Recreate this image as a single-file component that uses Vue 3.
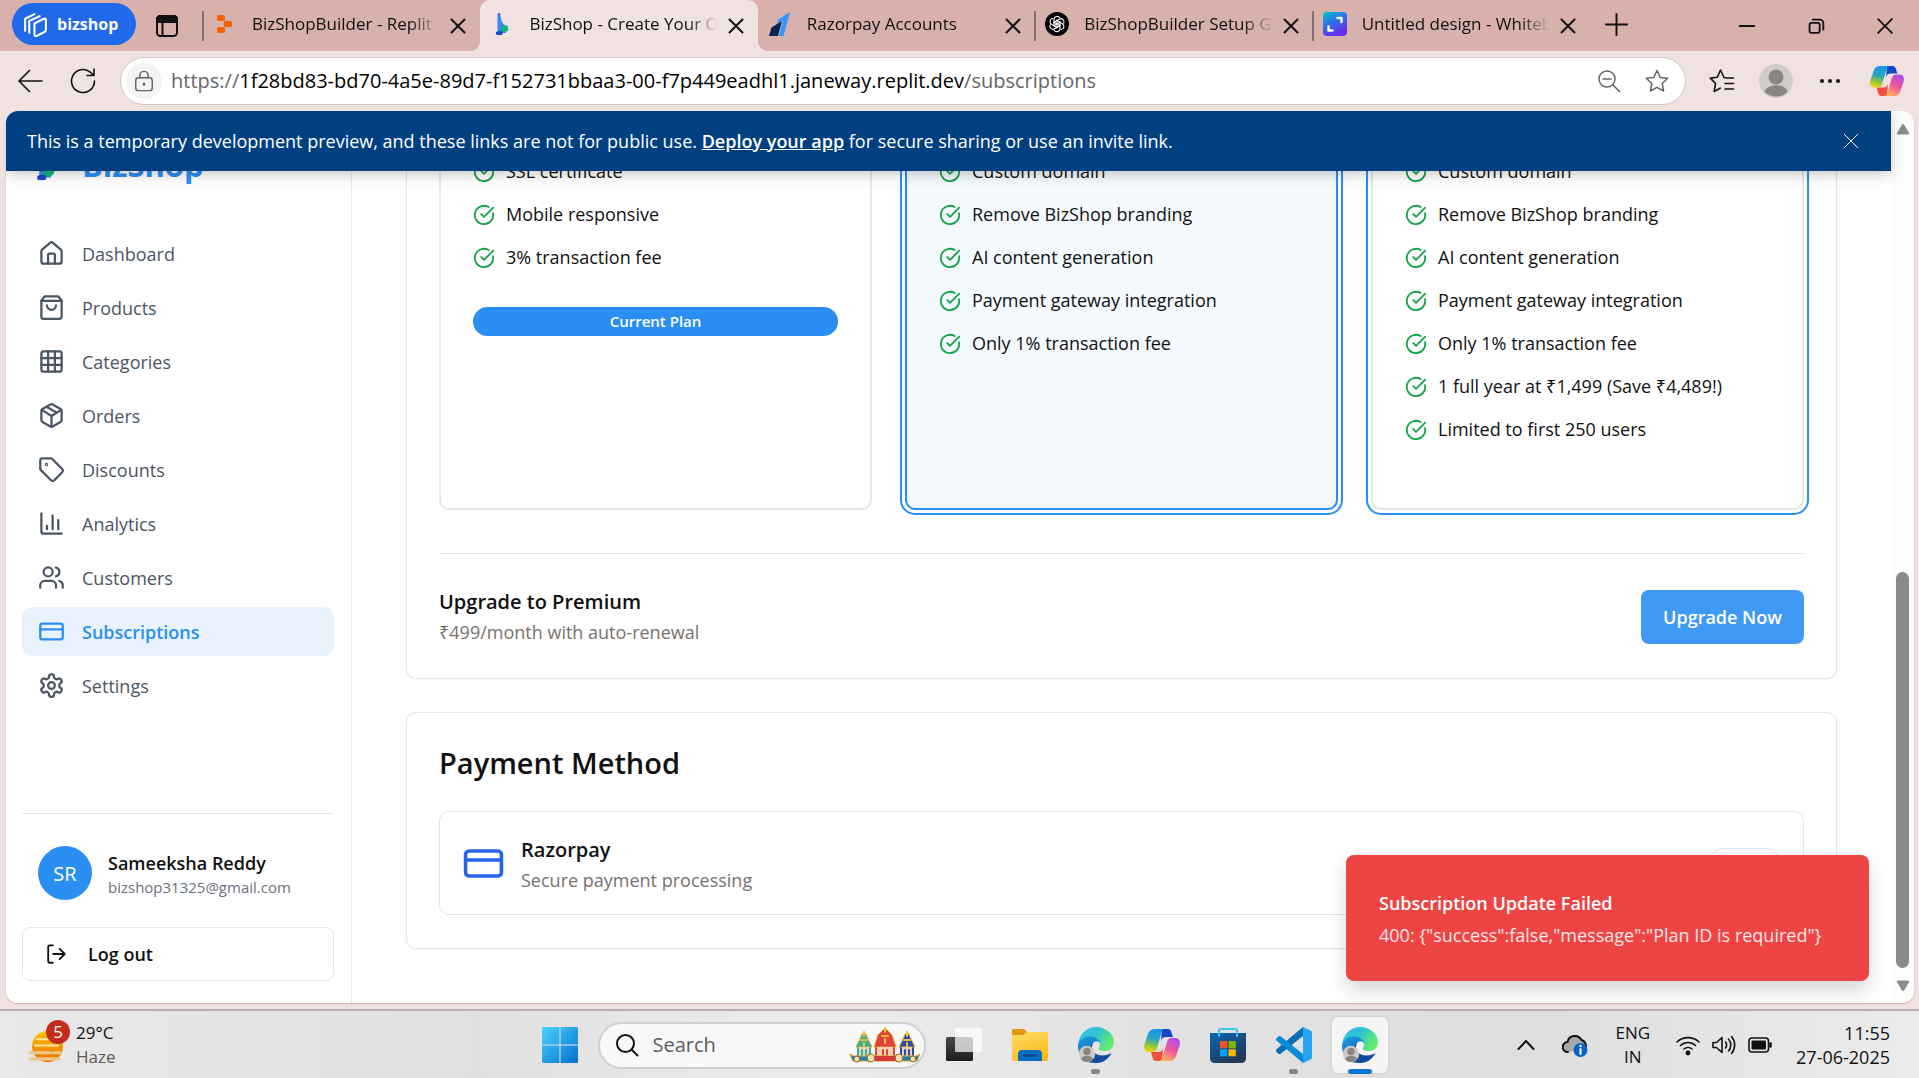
<script setup>
import { ref } from 'vue'

const tabs = [
  { title: 'BizShopBuilder - Replit', icon: 'replit' },
  { title: 'BizShop - Create Your Own Store', icon: 'bizshop', active: true },
  { title: 'Razorpay Accounts', icon: 'razorpay' },
  { title: 'BizShopBuilder Setup Guide', icon: 'chatgpt' },
  { title: 'Untitled design - Whiteboard', icon: 'canva' }
]

const navItems = [
  { label: 'Dashboard', icon: 'home' },
  { label: 'Products', icon: 'bag' },
  { label: 'Categories', icon: 'grid' },
  { label: 'Orders', icon: 'package' },
  { label: 'Discounts', icon: 'tag' },
  { label: 'Analytics', icon: 'chart' },
  { label: 'Customers', icon: 'users' },
  { label: 'Subscriptions', icon: 'card', active: true },
  { label: 'Settings', icon: 'gear' }
]

const plans = [
  {
    kind: 'basic',
    current: true,
    features: ['SSL certificate', 'Mobile responsive', '3% transaction fee']
  },
  {
    kind: 'selected',
    features: [
      'Custom domain',
      'Remove BizShop branding',
      'AI content generation',
      'Payment gateway integration',
      'Only 1% transaction fee'
    ]
  },
  {
    kind: 'offer',
    features: [
      'Custom domain',
      'Remove BizShop branding',
      'AI content generation',
      'Payment gateway integration',
      'Only 1% transaction fee',
      '1 full year at ₹1,499 (Save ₹4,489!)',
      'Limited to first 250 users'
    ]
  }
]

const dockApps = [
  { name: 'Task view', icon: 'taskview' },
  { name: 'File Explorer', icon: 'folder' },
  { name: 'Edge', icon: 'edge', running: true },
  { name: 'Copilot', icon: 'copilot' },
  { name: 'Store', icon: 'store' },
  { name: 'Code', icon: 'vscode', running: true },
  { name: 'Edge window', icon: 'edge', active: true }
]

const search = ref('')
</script>

<template>
  <svg class="sprite" aria-hidden="true">
    <defs>
      <linearGradient id="g-edge-a" x1="0" y1="0" x2="1" y2="0.5">
        <stop offset="0" stop-color="#35c1f1" /><stop offset="0.5" stop-color="#2bc3d2" /><stop offset="1" stop-color="#66eb6e" />
      </linearGradient>
      <linearGradient id="g-edge-b" x1="0" y1="0" x2="0.4" y2="1">
        <stop offset="0" stop-color="#1b9de2" /><stop offset="1" stop-color="#0f63b8" />
      </linearGradient>
      <linearGradient id="g-cop-a" x1="0.4" y1="0" x2="0.2" y2="1">
        <stop offset="0" stop-color="#1697e8" /><stop offset="0.4" stop-color="#2aa5c4" /><stop offset="0.7" stop-color="#8dc63f" /><stop offset="1" stop-color="#ffd60a" />
      </linearGradient>
      <linearGradient id="g-cop-b" x1="0.8" y1="0" x2="0.3" y2="1">
        <stop offset="0" stop-color="#a84df0" /><stop offset="0.5" stop-color="#f0559b" /><stop offset="1" stop-color="#ffb25c" />
      </linearGradient>
      <linearGradient id="g-canva" x1="0" y1="0" x2="0.5" y2="1">
        <stop offset="0" stop-color="#00c4cc" /><stop offset="0.5" stop-color="#2f6fe8" /><stop offset="1" stop-color="#6a2cf0" />
      </linearGradient>
      <linearGradient id="g-win" gradientUnits="userSpaceOnUse" x1="0" y1="0" x2="35" y2="35">
        <stop offset="0" stop-color="#4fd2fd" /><stop offset="1" stop-color="#0070d0" />
      </linearGradient>
      <linearGradient id="g-folder" x1="0" y1="0" x2="0.5" y2="1">
        <stop offset="0" stop-color="#ffdd6b" /><stop offset="1" stop-color="#fbbc1d" />
      </linearGradient>
      <linearGradient id="g-store" x1="0" y1="0" x2="0.6" y2="1">
        <stop offset="0" stop-color="#0a67b5" /><stop offset="1" stop-color="#243757" />
      </linearGradient>
      <linearGradient id="g-sun" x1="0" y1="0" x2="0" y2="1">
        <stop offset="0" stop-color="#ffc400" /><stop offset="1" stop-color="#ef6c00" />
      </linearGradient>
      <linearGradient id="g-dark" x1="0" y1="0" x2="0" y2="1">
        <stop offset="0" stop-color="#4a4a4a" /><stop offset="1" stop-color="#1c1c1c" />
      </linearGradient>
    </defs>

    <symbol id="i-close" viewBox="0 0 24 24"><path d="M5.500 5.500l13 13M18.500 5.500l-13 13" /></symbol>
    <symbol id="i-home" viewBox="0 0 24 24"><path d="M15 21v-8a1 1 0 0 0-1-1h-4a1 1 0 0 0-1 1v8" /><path d="M3 10a2 2 0 0 1 .709-1.528l7-5.999a2 2 0 0 1 2.582 0l7 5.999A2 2 0 0 1 21 10v9a2 2 0 0 1-2 2H5a2 2 0 0 1-2-2z" /></symbol>
    <symbol id="i-bag" viewBox="0 0 24 24"><path d="M6 2 3 6v14a2 2 0 0 0 2 2h14a2 2 0 0 0 2-2V6l-3-4Z" /><path d="M3 6h18" /><path d="M16 10a4 4 0 0 1-8 0" /></symbol>
    <symbol id="i-grid" viewBox="0 0 24 24"><rect x="3" y="3" width="18" height="18" rx="2" /><path d="M3 9h18M3 15h18M9 3v18M15 3v18" /></symbol>
    <symbol id="i-package" viewBox="0 0 24 24"><path d="M11 21.730a2 2 0 0 0 2 0l7-4A2 2 0 0 0 21 16V8a2 2 0 0 0-1-1.730l-7-4a2 2 0 0 0-2 0l-7 4A2 2 0 0 0 3 8v8a2 2 0 0 0 1 1.730z" /><path d="M12 22V12" /><path d="m3.300 7 7.703 4.734a2 2 0 0 0 1.994 0L20.700 7" /><path d="m7.500 4.270 9 5.150" /></symbol>
    <symbol id="i-tag" viewBox="0 0 24 24"><path d="M12.586 2.586A2 2 0 0 0 11.172 2H4a2 2 0 0 0-2 2v7.172a2 2 0 0 0 .586 1.414l8.704 8.704a2.426 2.426 0 0 0 3.420 0l6.580-6.580a2.426 2.426 0 0 0 0-3.420z" /><circle cx="7.500" cy="7.500" r=".5" /></symbol>
    <symbol id="i-chart" viewBox="0 0 24 24"><path d="M3 3v16a2 2 0 0 0 2 2h16M18 17V9M13 17V5M8 17v-3" /></symbol>
    <symbol id="i-users" viewBox="0 0 24 24"><path d="M16 21v-2a4 4 0 0 0-4-4H6a4 4 0 0 0-4 4v2" /><circle cx="9" cy="7" r="4" /><path d="M22 21v-2a4 4 0 0 0-3-3.870M16 3.130a4 4 0 0 1 0 7.750" /></symbol>
    <symbol id="i-card" viewBox="0 0 24 24"><rect x="2" y="5" width="20" height="14" rx="2" /><path d="M2 10h20" /></symbol>
    <symbol id="i-gear" viewBox="0 0 24 24"><path d="M12.220 2h-.440a2 2 0 0 0-2 2v.180a2 2 0 0 1-1 1.730l-.430.250a2 2 0 0 1-2 0l-.150-.080a2 2 0 0 0-2.730.730l-.220.380a2 2 0 0 0 .730 2.730l.150.100a2 2 0 0 1 1 1.720v.510a2 2 0 0 1-1 1.740l-.150.090a2 2 0 0 0-.730 2.730l.220.380a2 2 0 0 0 2.730.730l.150-.080a2 2 0 0 1 2 0l.430.250a2 2 0 0 1 1 1.730V20a2 2 0 0 0 2 2h.440a2 2 0 0 0 2-2v-.180a2 2 0 0 1 1-1.730l.430-.250a2 2 0 0 1 2 0l.150.080a2 2 0 0 0 2.730-.730l.220-.390a2 2 0 0 0-.730-2.730l-.150-.080a2 2 0 0 1-1-1.740v-.500a2 2 0 0 1 1-1.740l.150-.090a2 2 0 0 0 .730-2.730l-.220-.380a2 2 0 0 0-2.730-.730l-.150.080a2 2 0 0 1-2 0l-.430-.250a2 2 0 0 1-1-1.730V4a2 2 0 0 0-2-2z" /><circle cx="12" cy="12" r="3" /></symbol>
    <symbol id="i-check" viewBox="0 0 24 24"><path d="M21.801 10A10 10 0 1 1 17 3.335" /><path d="m9 11 3 3L22 4" /></symbol>
    <symbol id="i-logout" viewBox="0 0 24 24"><path d="M8.500 2.500H5a1.500 1.500 0 0 0-1.500 1.500v16A1.500 1.500 0 0 0 5 21.500h3.500M9 12h12.500M16 6.500l5.500 5.500-5.500 5.500" /></symbol>

    <symbol id="i-replit" viewBox="0 0 24 24"><g fill="#f26207" stroke="none"><rect x="4" y="3" width="8" height="6" rx="1.500" /><rect x="11" y="9" width="8" height="6" rx="1.500" /><rect x="4" y="15" width="8" height="6" rx="1.500" /></g></symbol>
    <symbol id="i-bizshop" viewBox="0 0 24 24"><g stroke="none"><path d="M7.500 4h3l1 5 4.500 6v6H7.500z" fill="#3f86f5" /><path d="M10.500 20c-.5-5 3-8 6-6.500 3.500 2 2.500 8-6 7.500z" fill="#12b581" /><path d="M6 20q4-2 6.500 0v2.500q-3 1-6.500 0z" fill="#1f45c4" /><circle cx="9" cy="2.500" r="1.500" fill="#2563eb" /></g></symbol>
    <symbol id="i-razorpay" viewBox="0 0 24 24"><g stroke="none"><path d="M22 0 15.500 24H11l4.200-16L9 12l1.200-4.400z" fill="#3395ff" /><path d="M3.500 15.500 14 9l-4 15H1z" fill="#072654" /></g></symbol>
    <symbol id="i-chatgpt" viewBox="0 0 24 24"><circle cx="12" cy="12" r="12" fill="#000" stroke="none" /><g fill="none" stroke="#fff" stroke-width="1.100"><path id="petal" d="M12 11.900 9 10.200V7.500a3.100 3.100 0 0 1 5.700-1.700M9 10.200v4" /><use href="#petal" transform="rotate(60 12 12)" /><use href="#petal" transform="rotate(120 12 12)" /><use href="#petal" transform="rotate(180 12 12)" /><use href="#petal" transform="rotate(240 12 12)" /><use href="#petal" transform="rotate(300 12 12)" /></g></symbol>
    <symbol id="i-canva" viewBox="0 0 24 24"><rect width="24" height="24" rx="4" fill="url(#g-canva)" stroke="none" /><path d="M14.500 6h4v4M9.500 18.500H5.500v-4" fill="none" stroke="#fff" stroke-width="2.500" /></symbol>

    <symbol id="i-edge" viewBox="0 0 36 36"><g stroke="none">
      <path d="M18 0C28 0 36 7 36 15c0 6-4 9-9 9-4 0-7-1-6-3 3-5-1-10-7-10C6 11 1 15 0 20 0 8 8 0 18 0z" fill="url(#g-edge-a)" />
      <path d="M0 19C1 12 8 8.500 14 9.500c5 1 8.500 4.500 8.500 8 0-3-4-4.500-7-2-5 5-2 15 6 19.500C8 39 0 30 0 19z" fill="url(#g-edge-b)" />
      <path d="M15.500 15.500c-4 6 0 13 9 13 4 0 7-1.500 9-2.500C30 33 24 36 18 36 9 34 9 20 15.500 15.500z" fill="#114a9e" />
      <circle cx="9" cy="27" r="8.200" fill="#cfcac6" /><circle cx="9" cy="24.500" r="3.700" fill="#8b8581" /><path d="M3 32.500c1-5 11-5 12 0a8.200 8.200 0 0 1-12 0z" fill="#8b8581" />
    </g></symbol>
    <symbol id="i-copilot" viewBox="0 0 36 36"><g stroke="none">
      <path d="M18 2h6c2 0 3 1.500 3.500 3.500L29 10h-7c-3 0-4 1-5 4z" fill="#1546c8" />
      <path d="M18 34h-6c-2 0-3-1.500-3.500-3.500L7 25h7c3 0 4-1 5-4z" fill="#f4513c" />
      <path d="M11 2h10c-2 0-3 1.500-3.600 4L13 21c-.7 2.500-2 4-5 4H5c-4 0-6-3-4.500-8L4 7c1-3.500 3.500-5 7-5z" fill="url(#g-cop-a)" />
      <path d="M25 34H15c2 0 3-1.500 3.600-4L23 15c.7-2.500 2-4 5-4h3c4 0 6 3 4.500 8L32 29c-1 3.500-3.500 5-7 5z" fill="url(#g-cop-b)" />
    </g></symbol>
    <symbol id="i-taskview" viewBox="0 0 36 36"><g stroke="none"><rect x="0" y="10" width="27" height="24" rx="1.500" fill="url(#g-dark)" /><rect x="9" y="1" width="27" height="24" rx="1.500" fill="#fff" fill-opacity="0.720" /></g></symbol>
    <symbol id="i-folder" viewBox="0 0 36 36"><g stroke="none"><path d="M0 3.500C0 2.500.7 2 1.500 2H12l4 4-3 4H0z" fill="#dc9a0b" /><path d="M0 8h11l4-3h20q1 0 1 1v27q0 1-1 1H1q-1 0-1-1z" fill="url(#g-folder)" /><path d="M6 34V27q0-4 4-4h16q4 0 4 4v7z" fill="#0a6cc0" /><rect x="11" y="27.500" width="14" height="2" rx="1" fill="#07437f" /></g></symbol>
    <symbol id="i-store" viewBox="0 0 36 36"><path d="M9 9V4q0-2 2-2h14q2 0 2 2v5" fill="none" stroke="#3fc7f2" stroke-width="2" /><g stroke="none"><path d="M0 6h36v25q0 5-5 5H5q-5 0-5-5z" fill="url(#g-store)" /><path d="M10 14h7.300v7.300H10z" fill="#f25022" /><path d="M18.500 14h7.300v7.300h-7.300z" fill="#7fba00" /><path d="M10 22.300h7.300v7H10z" fill="#00a4ef" /><path d="M18.500 22.300h7.300v7h-7.300z" fill="#ffb900" /></g><path d="M9 9V6M27 9V6" stroke="#3fc7f2" stroke-width="2" /></symbol>
    <symbol id="i-vscode" viewBox="0 0 36 36"><g stroke="none"><path d="M27 0v9L5 26.500q-1.500 1-3 0L.6 25q-1.200-1.500.2-3z" fill="#0a6fb3" /><path d="M27 36v-9L5 9.500q-1.500-1-3 0L.6 11q-1.200 1.500.2 3z" fill="#0d8ad6" /><path d="M27 0l7.500 3.500Q36 4.200 36 6v24q0 1.800-1.500 2.500L27 36z" fill="#27a4f2" /></g></symbol>
    <symbol id="i-win" viewBox="0 0 35 35"><path d="M1 0h16v17H0V1q0-1 1-1zM18 0h16q1 0 1 1v16H18zM0 18h17v17H1q-1 0-1-1zM18 18h17v16q0 1-1 1H18z" fill="url(#g-win)" stroke="none" /></symbol>
  </svg>

  <div class="desktop">
    <header class="titlebar">
      <button class="workspace" type="button">
        <svg class="ws-icon" viewBox="0 0 26 26"><path d="M3 19V7.500L12 3M7 21V9.500L17 5M12 12l9-4.500q2-.8 2 1.200V18q0 1.500-1.500 2.200l-7 3.600q-2.500 1-2.500-1.300z" /></svg>
        <span>bizshop</span>
      </button>
      <button class="tab-actions" type="button" aria-label="Tab actions">
        <svg viewBox="0 0 24 24"><rect x="2" y="2" width="20" height="20" rx="3.500" /><path d="M2 8V5.500Q2 2 5.500 2h13Q22 2 22 5.500V8z" fill="#111" /><path d="M7.500 8v14" /></svg>
      </button>
      <nav class="tabs" aria-label="Tabs">
        <div v-for="tab in tabs" :key="tab.title" class="tab" :class="{ active: tab.active }">
          <svg class="favicon"><use :href="'#i-' + tab.icon" /></svg>
          <span class="tab-title">{{ tab.title }}</span>
          <button class="tab-close" type="button" aria-label="Close tab"><svg><use href="#i-close" /></svg></button>
        </div>
      </nav>
      <button class="new-tab" type="button" aria-label="New tab"><svg viewBox="0 0 24 24"><path d="M12 1v22M1 12h22" /></svg></button>
      <div class="window-buttons">
        <button type="button" aria-label="Minimize"><svg viewBox="0 0 24 24"><path d="M4 12h16" /></svg></button>
        <button type="button" aria-label="Restore"><svg viewBox="0 0 24 24"><rect x="5" y="8.500" width="11" height="11" rx="2" /><path d="M8.500 5H16a4 4 0 0 1 4 4v7" /></svg></button>
        <button type="button" aria-label="Close"><svg viewBox="0 0 24 24"><path d="M4.500 4.500l15 15M19.500 4.500l-15 15" /></svg></button>
      </div>
    </header>

    <div class="toolbar">
      <button class="tool" type="button" aria-label="Back"><svg viewBox="0 0 26 26"><path d="M25 13H2M12.500 2.500 2 13l10.500 10.500" /></svg></button>
      <button class="tool" type="button" aria-label="Refresh"><svg viewBox="0 0 26 26"><path d="M24.500 13A11.500 11.500 0 1 1 20.500 4.300L24 7.500M24 1v6.500h-7" /></svg></button>
      <div class="address">
        <span class="lock"><svg viewBox="0 0 24 24"><rect x="3" y="8.500" width="18" height="14" rx="3" /><path d="M7.500 8.500V6a4.500 4.500 0 0 1 9 0v2.500" /><circle cx="12" cy="15.500" r=".8" fill="#555" /></svg></span>
        <div class="url" role="textbox" contenteditable="true" spellcheck="false" aria-label="Address">https://<b>1f28bd83-bd70-4a5e-89d7-f152731bbaa3-00-f7p449eadhl1.janeway.replit.dev</b>/subscriptions</div>
        <button class="in-address" type="button" aria-label="Zoom"><svg viewBox="0 0 24 24"><circle cx="10" cy="10" r="8" /><path d="M6 10h8M16 16l6.500 6.500" /></svg></button>
        <button class="in-address" type="button" aria-label="Favourite"><svg viewBox="0 0 24 24"><path d="m12 1.500 3.200 6.900 7.500.9-5.500 5.200 1.400 7.500L12 18.300 5.400 22l1.400-7.500L1.300 9.300l7.500-.9z" /></svg></button>
      </div>
      <button class="tool" type="button" aria-label="Favourites"><svg viewBox="0 0 26 26"><path d="M24.500 10H18l-3-.500L11.500 2 8.300 9.200l-7 .9 5.200 5.300L5.200 23.500l6-3.300M16 15.500h8.500M16 21h8.500" /></svg></button>
      <span class="profile"><svg viewBox="0 0 34 34"><circle cx="17" cy="17" r="17" fill="#d0ccc9" /><circle cx="17" cy="13" r="7.500" fill="#8b8581" /><path d="M5.500 28c2-9 21-9 23 0a17 17 0 0 1-23 0z" fill="#8b8581" /></svg></span>
      <button class="tool more" type="button" aria-label="More"><svg viewBox="0 0 26 26"><g fill="#111" stroke="none"><circle cx="5" cy="13" r="2" /><circle cx="13" cy="13" r="2" /><circle cx="21" cy="13" r="2" /></g></svg></button>
      <button class="tool copilot" type="button" aria-label="Copilot"><svg><use href="#i-copilot" /></svg></button>
    </div>

    <div class="frame">
      <div class="page">
        <div class="banner">
          <p>This is a temporary development preview, and these links are not for public use. <a href="#deploy">Deploy your app</a> for secure sharing or use an invite link.</p>
          <button type="button" aria-label="Dismiss"><svg><use href="#i-close" /></svg></button>
        </div>

        <aside class="sidebar">
          <div class="brand"><svg><use href="#i-bizshop" /></svg><span>BizShop</span></div>
          <nav class="menu" aria-label="Main">
            <a v-for="item in navItems" :key="item.label" href="#" :class="{ active: item.active }">
              <svg><use :href="'#i-' + item.icon" /></svg><span>{{ item.label }}</span>
            </a>
          </nav>
          <div class="account">
            <div class="user">
              <span class="avatar">SR</span>
              <div class="who"><strong>Sameeksha Reddy</strong><small>bizshop31325@gmail.com</small></div>
            </div>
            <button class="logout" type="button"><svg><use href="#i-logout" /></svg><span>Log out</span></button>
          </div>
        </aside>

        <main class="content">
          <section class="panel plans-panel">
            <div class="plans">
              <article v-for="plan in plans" :key="plan.kind" class="plan" :class="plan.kind">
                <ul>
                  <li v-for="feature in plan.features" :key="feature"><svg><use href="#i-check" /></svg>{{ feature }}</li>
                </ul>
                <div v-if="plan.current" class="badge">Current Plan</div>
              </article>
            </div>
            <div class="upgrade">
              <div><h3>Upgrade to Premium</h3><p>₹499/month with auto-renewal</p></div>
              <button type="button">Upgrade Now</button>
            </div>
          </section>
          <section class="panel payment">
            <h2>Payment Method</h2>
            <div class="method">
              <svg><use href="#i-card" /></svg>
              <div class="who"><h3>Razorpay</h3><p>Secure payment processing</p></div>
              <span class="status"></span>
            </div>
          </section>
        </main>

        <div class="toast" role="alert">
          <strong>Subscription Update Failed</strong>
          <p>400: {"success":false,"message":"Plan ID is required"}</p>
        </div>
      </div>
      <div class="scrollbar" aria-hidden="true">
        <svg viewBox="0 0 14 12"><path d="M7 1q.8 0 1.300.8L13 10q.6 1.500-1 1.500H2Q.4 11.500 1 10l4.700-8.200Q6.200 1 7 1z" /></svg>
        <span class="track"><span class="thumb"></span></span>
        <svg viewBox="0 0 14 12"><path d="M7 11q.8 0 1.300-.8L13 2Q13.600.5 12 .5H2Q.4.5 1 2l4.700 8.200q.5.8 1.300.8z" /></svg>
      </div>
    </div>

    <footer class="taskbar">
      <div class="weather">
        <div class="sun">
          <svg viewBox="0 0 34 34"><circle cx="18" cy="18" r="15" fill="url(#g-sun)" stroke="none" /><path d="M8 11h12M6 17h22" stroke="#ffe9a8" stroke-width="2" /><path d="M1 24h20M24 24h6M1 30h28" stroke="#e8c98a" stroke-width="3" /></svg>
          <span class="count">5</span>
        </div>
        <div><div>29°C</div><div class="muted">Haze</div></div>
      </div>
      <div class="dock">
        <button class="app" type="button" aria-label="Start"><svg class="win"><use href="#i-win" /></svg></button>
        <label class="search">
          <svg class="lens" viewBox="0 0 24 24"><circle cx="10.500" cy="10.500" r="8.500" /><path d="m17 17 5.500 5.500" /></svg>
          <input v-model="search" type="text" placeholder="Search" aria-label="Search" />
          <svg class="rath" viewBox="0 0 72 36">
            <g v-for="c in [{ x: 15, y: 6, s: 8, f: '#2fb59b' }, { x: 58, y: 6, s: 8, f: '#2b4bb0' }, { x: 36, y: 2, s: 11, f: '#e0413f' }]" :key="c.x">
              <path :d="`M${c.x} ${c.y - 1} Q${c.x + 3} ${c.y + 2} ${c.x + c.s - 4} ${c.y + 6} L${c.x + c.s} 20 H${c.x - c.s} L${c.x - c.s + 4} ${c.y + 6} Q${c.x - 3} ${c.y + 2} ${c.x} ${c.y - 1}z`" :fill="c.f" stroke="#e3a52a" />
              <path :d="`M${c.x} ${c.y - 1}v4M${c.x - 3} ${c.y + 7}h6M${c.x} ${c.y + 10}v4`" stroke="#f2c230" stroke-width="2" />
              <rect :x="c.x - c.s + 2" y="20" :width="2 * c.s - 4" height="9" fill="#ecd2b0" stroke="none" />
              <path :d="`M${c.x - c.s + 2} 21v7M${c.x + c.s - 2} 21v7M${c.x - 2} 23v5M${c.x + 2} 23v5`" :stroke="c.f" stroke-width="2" />
            </g>
            <path d="M1 27q3 3 7 2h56q4 1 7-2l-3 7H4z" fill="#1c7fb5" stroke="#e3a52a" />
            <path d="M26 29h20v5H26z" fill="#d8383a" stroke="none" />
            <g fill="#f3dfae" stroke="#7d6532"><circle cx="8" cy="32" r="3" /><circle cx="22" cy="31" r="4" /><circle cx="50" cy="31" r="4" /><circle cx="64" cy="32" r="3" /></g>
          </svg>
        </label>
        <button v-for="app in dockApps" :key="app.name" class="app" :class="{ running: app.running, active: app.active }" type="button" :aria-label="app.name">
          <svg><use :href="'#i-' + app.icon" /></svg>
        </button>
      </div>
      <div class="tray">
        <svg class="chev" viewBox="0 0 18 18"><path d="m1.500 13 7.500-8 7.500 8" /></svg>
        <svg class="cloud" viewBox="0 0 26 26"><path d="M6 20a5 5 0 0 1-.5-10A7.500 7.500 0 0 1 19.500 8a6 6 0 0 1 4 8" fill="#a8a8a8" /><circle cx="18.500" cy="18" r="7" fill="#0a63c0" stroke="none" /><path d="M18.500 17v5" stroke="#fff" stroke-width="2" /><circle cx="18.500" cy="14" r="1.200" fill="#fff" stroke="none" /></svg>
        <div class="lang"><div>ENG</div><div>IN</div></div>
        <div class="system">
          <svg viewBox="0 0 24 24"><path d="M1 9a16 16 0 0 1 22 0M4.500 12.500a11 11 0 0 1 15 0M8 16a6 6 0 0 1 8 0" /><circle cx="12" cy="20" r="1.600" fill="#111" /></svg>
          <svg viewBox="0 0 24 24"><path d="M1 9.500v5h3.500L10 19.500v-15L4.500 9.500zM13.500 9a5 5 0 0 1 0 6M16.500 6a9 9 0 0 1 0 12M19.500 3.500a13 13 0 0 1 0 17" /></svg>
          <svg viewBox="0 0 24 24"><rect x="1" y="5" width="19.500" height="14" rx="3" /><rect x="3.500" y="7.500" width="14.500" height="9" rx="1" fill="#111" stroke="none" /><path d="M22.500 10.500v3" stroke-width="2.500" /></svg>
        </div>
        <div class="clock"><div>11:55</div><div>27-06-2025</div></div>
      </div>
    </footer>
  </div>
</template>

<style>
body {
  background: #f0e2e0;
}
</style>

<style scoped>
* {
  box-sizing: border-box;
}
h2, h3, p, ul {
  margin: 0;
  padding: 0;
}
button {
  font: inherit;
  color: inherit;
  background: none;
  border: 0;
  padding: 0;
}
svg {
  display: block;
  flex: none;
  fill: none;
  stroke: currentColor;
  stroke-linecap: round;
  stroke-linejoin: round;
}
.sprite {
  position: absolute;
  width: 0;
  height: 0;
}
.desktop {
  display: flex;
  flex-direction: column;
  min-height: 100vh;
  font-family: "Open Sans", "Noto Sans", sans-serif;
  font-size: 17px;
  color: #111;
  background: #f0e2e0;
}

/* title bar */
.titlebar {
  display: flex;
  align-items: center;
  height: 51px;
  padding-left: 12px;
  background: #d8b1ac;
}
.workspace {
  display: flex;
  align-items: center;
  gap: 8px;
  height: 42px;
  width: 124px;
  padding: 0 0 0 10px;
  margin-bottom: 3px;
  border-radius: 21px;
  background: #2169eb;
  color: #fff;
  font-size: 16px;
  font-weight: 700;
}
.ws-icon {
  width: 27px;
  height: 27px;
  stroke-width: 2;
}
.tab-actions {
  margin: 0 24px 0 19px;
}
.tab-actions svg {
  width: 24px;
  height: 24px;
  stroke-width: 2;
}
.tabs {
  display: flex;
  flex: 0 1 1387px;
  height: 51px;
  min-width: 0;
}
.tab {
  display: flex;
  align-items: center;
  flex: 1 1 0;
  min-width: 0;
  padding: 0 10px;
  position: relative;
}
.tab:not(.active)::before {
  content: "";
  position: absolute;
  left: -1px;
  top: 11px;
  height: 30px;
  width: 2px;
  background: #8a6e6b;
}
.tab.active + .tab::before {
  display: none;
}
.tab.active {
  background: #f0e2e0;
  border-radius: 10px 10px 0 0;
}
.tab.active::before,
.tab.active::after {
  content: "";
  position: absolute;
  bottom: 0;
  width: 10px;
  height: 10px;
}
.tab.active::before {
  left: -10px;
  background: radial-gradient(circle at 0 0, transparent 10px, #f0e2e0 10px);
}
.tab.active::after {
  right: -10px;
  background: radial-gradient(circle at 100% 0, transparent 10px, #f0e2e0 10px);
}
.favicon {
  width: 24px;
  height: 24px;
  margin: 0 15px 3px 0;
}
.tab-title {
  flex: 1;
  overflow: hidden;
  white-space: nowrap;
  line-height: 24px;
  margin: 0 6px 3px 0;
  mask-image: linear-gradient(90deg, #000 calc(100% - 30px), transparent);
}
.tab-close svg {
  width: 24px;
  height: 24px;
  stroke-width: 2;
}
.new-tab {
  margin: 0 auto 3px 15px;
}
.new-tab svg {
  width: 23px;
  height: 23px;
  stroke-width: 2;
}
.window-buttons {
  display: flex;
}
.window-buttons button {
  display: grid;
  place-items: center;
  width: 69px;
}
.window-buttons svg {
  width: 22px;
  height: 22px;
  stroke-width: 2;
}

/* toolbar */
.toolbar {
  display: flex;
  align-items: center;
  height: 60px;
  padding: 0 15px 0 17px;
}
.tool svg {
  width: 26px;
  height: 26px;
  stroke-width: 1.6;
}
.tool + .tool {
  margin-left: 27px;
}
.address {
  display: flex;
  align-items: center;
  flex: 1;
  min-width: 0;
  height: 48px;
  margin: 0 23px 0 24px;
  padding: 0 16px 0 5px;
  border: 1px solid #cfc8c6;
  border-radius: 24px;
  background: #fff;
  color: #666;
}
.lock {
  display: grid;
  place-items: center;
  width: 36px;
  height: 36px;
  border-radius: 50%;
  background: #f3f3f3;
}
.lock svg {
  width: 22px;
  height: 22px;
  stroke-width: 1.6;
}
.url {
  flex: 1;
  min-width: 0;
  overflow: hidden;
  white-space: nowrap;
  margin-left: 9px;
  font-size: 20px;
  line-height: 28px;
}
.url b {
  font-weight: 400;
  color: #000;
}
.in-address {
  margin-left: 24px;
}
.in-address svg {
  width: 24px;
  height: 24px;
  stroke-width: 1.5;
}
.profile {
  margin: 0 24px;
}
.profile svg {
  width: 34px;
  height: 34px;
  stroke: none;
}
.tool.copilot svg {
  width: 34px;
  height: 34px;
}

/* page frame */
.frame {
  display: flex;
  flex: 1;
  margin: 0 5px 6px 6px;
  border-radius: 12px;
  overflow: hidden;
  background: #fcfcfc;
  box-shadow: 0 1px 2px #c9b0ad;
  font-size: 18px;
}
.page {
  display: flex;
  flex: 1;
  min-width: 0;
  position: relative;
  background: #fff;
}
.banner {
  position: absolute;
  z-index: 2;
  inset: 0 0 auto 0;
  display: flex;
  align-items: center;
  justify-content: space-between;
  height: 60px;
  padding: 0 28px 0 21px;
  background: #004080;
  color: #fff;
  line-height: 24px;
  box-shadow: 0 4px 12px rgba(0, 0, 0, 0.2);
}
.banner a {
  color: #fff;
  font-weight: 600;
}
.banner svg {
  width: 24px;
  height: 24px;
  stroke-width: 1;
}
.scrollbar {
  display: flex;
  flex-direction: column;
  align-items: center;
  width: 23px;
  padding: 12px 0 11px;
  color: #8a8a8a;
}
.scrollbar svg {
  width: 14px;
  height: 12px;
  fill: #8a8a8a;
  stroke: none;
}
.track {
  display: flex;
  flex: 1;
  flex-direction: column;
  justify-content: flex-end;
  padding: 8px 0 12px;
}
.thumb {
  width: 13px;
  height: 48%;
  border-radius: 7px;
  background: #8a8a8a;
}

/* sidebar */
.sidebar {
  display: flex;
  flex-direction: column;
  flex: 0 0 346px;
  padding: 34px 17px 22px 16px;
  border-right: 1px solid #e5e7eb;
}
.brand {
  display: flex;
  align-items: center;
  gap: 20px;
  height: 40px;
  padding-left: 7px;
  color: #2b8ef3;
  font-size: 31px;
  font-weight: 700;
}
.brand svg {
  width: 33px;
  height: 40px;
}
.menu {
  display: flex;
  flex-direction: column;
  gap: 5px;
  margin-top: 44px;
}
.menu a {
  display: flex;
  align-items: center;
  gap: 17px;
  height: 49px;
  padding: 0 16px;
  border-radius: 10px;
  color: #4b5563;
  text-decoration: none;
}
.menu a.active {
  background: #e9f3fe;
  color: #2b8ef3;
  font-weight: 600;
}
.menu svg {
  width: 27px;
  height: 27px;
  stroke-width: 2;
}
.account {
  margin-top: auto;
  padding-top: 32px;
  border-top: 1px solid #e5e7eb;
}
.user {
  display: flex;
  align-items: center;
  gap: 16px;
  padding: 0 16px;
  margin-bottom: 27px;
}
.who {
  padding-top: 4px;
}
.avatar {
  display: grid;
  place-items: center;
  width: 54px;
  height: 54px;
  border-radius: 50%;
  background: #2b8ef3;
  color: #fff;
  font-size: 20px;
}
.user strong,
.user small {
  display: block;
  line-height: 24px;
}
.user strong {
  font-weight: 600;
}
.user small {
  font-size: 15px;
  color: #6b7280;
}
.logout {
  display: flex;
  align-items: center;
  gap: 21px;
  width: 100%;
  height: 54px;
  padding: 0 22px;
  border: 1px solid #e5e5e5;
  border-radius: 8px;
  font-weight: 600;
}
.logout svg {
  width: 22px;
  height: 22px;
  stroke-width: 2;
}

/* content */
.content {
  flex: 1;
  min-width: 0;
  padding: 0 54px 54px;
}
.panel {
  padding: 0 32px 33px;
  border: 1px solid #e5e5e5;
  border-radius: 10px;
  box-shadow: 0 1px 2px rgba(0, 0, 0, 0.05);
}
.plans-panel {
  padding-bottom: 31px;
  border-top: 0;
  border-radius: 0 0 10px 10px;
}
.plans {
  display: grid;
  grid-template-columns: repeat(3, 1fr);
  gap: 33px;
}
.plan {
  padding: 47px 32px 33px;
  border: 2px solid #e5e7eb;
  border-top: 0;
  border-radius: 0 0 10px 10px;
}
.plan.selected {
  border-color: #2b8ef3;
  background: #f4f9fe;
}
.plan.selected,
.plan.offer {
  outline: 2px solid #2b8ef3;
  outline-offset: 3px;
}
.plan ul {
  display: flex;
  flex-direction: column;
  gap: 16px;
  margin-bottom: 32px;
  list-style: none;
}
.plan li {
  display: flex;
  align-items: center;
  gap: 11px;
  line-height: 27px;
}
.plan li svg {
  width: 22px;
  height: 22px;
  stroke-width: 2;
  color: #16a34a;
}
.badge {
  margin-top: 36px;
  border-radius: 15px;
  background: #2b8ef3;
  color: #fff;
  font-size: 15px;
  font-weight: 600;
  line-height: 29px;
  text-align: center;
}
.upgrade {
  display: flex;
  align-items: center;
  justify-content: space-between;
  margin-top: 43px;
  padding-top: 33px;
  border-top: 1px solid #e5e5e5;
}
h3 {
  font-size: 20px;
  font-weight: 600;
  line-height: 30px;
}
.upgrade p,
.method p {
  color: #78716c;
  line-height: 30px;
}
.upgrade button {
  width: 163px;
  height: 54px;
  border-radius: 8px;
  background: #409af5;
  color: #fff;
  font-weight: 600;
}
.payment {
  margin-top: 33px;
  padding-top: 31px;
}
.payment h2 {
  font-size: 29px;
  font-weight: 600;
  line-height: 38px;
}
.method {
  display: flex;
  align-items: center;
  gap: 16px;
  height: 104px;
  margin-top: 29px;
  padding: 0 22px;
  border: 1px solid #e5e5e5;
  border-radius: 10px;
}
.method svg {
  width: 43px;
  height: 43px;
  stroke-width: 2;
  color: #2563eb;
}
.status {
  width: 72px;
  height: 30px;
  margin-left: auto;
  border: 1px solid #e5e5e5;
  border-radius: 15px;
}
.toast {
  position: absolute;
  z-index: 3;
  right: 22px;
  bottom: 22px;
  width: 523px;
  padding: 32px 33px 30px;
  border-radius: 8px;
  background: #ef4444;
  color: #fff;
  line-height: 32px;
  box-shadow: 0 10px 20px rgba(0, 0, 0, 0.16);
}
.toast strong {
  display: block;
  font-weight: 600;
}
.toast p {
  color: #fde8e8;
}

/* taskbar */
.taskbar {
  display: grid;
  grid-template-columns: 1fr auto 1fr;
  align-items: center;
  height: 70px;
  padding: 0 29px;
  border-top: 2px solid #b5b1b0;
  background: linear-gradient(90deg, #e8e8e8, #e0e0e0 25%, #ececec 42%, #e2e2e2 60%, #dedede 80%, #ebebeb);
  font-size: 17px;
  line-height: 24px;
}
.weather {
  display: flex;
  align-items: center;
  gap: 12px;
}
.sun {
  position: relative;
}
.sun svg {
  width: 35px;
  height: 35px;
}
.count {
  position: absolute;
  right: -6px;
  top: -8px;
  width: 24px;
  height: 24px;
  border-radius: 50%;
  background: #c42b1c;
  color: #fff;
  text-align: center;
}
.muted {
  color: #5c5c5c;
}
.dock {
  display: flex;
  align-items: center;
  gap: 10px;
}
.app {
  position: relative;
  display: grid;
  place-items: center;
  width: 56px;
  height: 56px;
  border-radius: 6px;
}
.app svg {
  width: 36px;
  height: 36px;
}
.app.active {
  background: #f4f4f4;
  box-shadow: 0 0 2px #b0b0b0;
}
.app.running::after,
.app.active::after {
  content: "";
  position: absolute;
  bottom: -1px;
  width: 9px;
  height: 5px;
  border-radius: 3px;
  background: #858585;
}
.app.active::after {
  width: 24px;
  background: #0a78d6;
}
.search {
  display: flex;
  align-items: center;
  width: 328px;
  height: 47px;
  padding: 0 3px 0 15px;
  border: 2px solid #cfcfcf;
  border-radius: 24px;
  background: #f8f8f8;
}
.lens {
  width: 24px;
  height: 24px;
  stroke-width: 2;
}
.search input {
  flex: 1;
  min-width: 0;
  margin-left: 14px;
  padding: 0;
  border: 0;
  outline: 0;
  background: none;
  font: inherit;
  font-size: 20px;
}
.search input::placeholder {
  color: #5c5c5c;
}
.rath {
  width: 72px;
  height: 36px;
}
.tray {
  display: flex;
  align-items: center;
  justify-content: flex-end;
  text-align: center;
}
.tray svg {
  stroke-width: 2;
}
.chev {
  width: 18px;
  height: 18px;
}
.cloud {
  width: 26px;
  height: 26px;
  margin: 0 27px;
}
.system {
  display: flex;
  gap: 12px;
  margin: 0 24px 0 26px;
}
.system svg {
  width: 24px;
  height: 24px;
  stroke-width: 1.6;
}
.clock {
  font-size: 18px;
  text-align: right;
}
</style>
